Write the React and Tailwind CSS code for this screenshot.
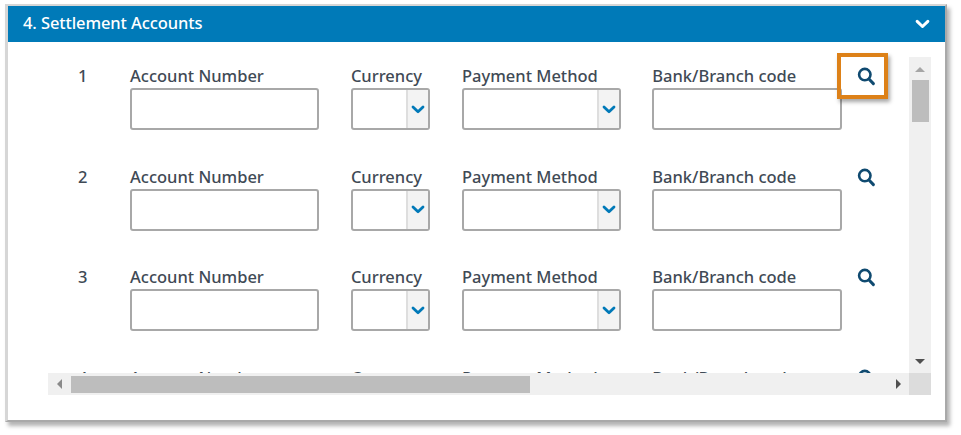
import React from 'react';

const labelFont = "font-['Noto_Sans','Open_Sans',sans-serif]";

const SearchIcon = () => (
  <svg width="20" height="20" viewBox="0 0 20 20" fill="none" stroke="#0f4a70" strokeWidth="2.6" strokeLinecap="round">
    <circle cx="8.8" cy="8.6" r="5.7" />
    <path d="M13.2 13.2 L17.4 17.6" strokeWidth="3" />
  </svg>
);

const Chevron = ({ color = '#0079b8', w = 14, h = 9 }) => (
  <svg width={w} height={h} viewBox="0 0 14 9" fill="none" stroke={color} strokeWidth="2.8" strokeLinecap="round" strokeLinejoin="round">
    <path d="M2 2 L7 6.8 L12 2" />
  </svg>
);

const Arrow = ({ points, color }) => (
  <svg width="12" height="12" viewBox="0 0 12 12">
    <polygon points={points} fill={color} />
  </svg>
);

const Field = ({ label, width, children }) => (
  <div className="flex flex-col shrink-0" style={{ width }}>
    <div className="h-[23px] text-[16.5px] leading-[22px] font-medium text-[#3f4a55] whitespace-nowrap">{label}</div>
    {children}
  </div>
);

const TextBox = () => (
  <div className="h-[42px] rounded-[3px] border-2 border-[#a8a8a8] bg-white" />
);

const SelectBox = () => (
  <div className="h-[42px] rounded-[3px] border-2 border-[#a8a8a8] bg-white flex justify-end">
    <div className="w-[22px] bg-[#f3f3f3] border-l-2 border-[#dedede] flex items-center justify-center">
      <Chevron />
    </div>
  </div>
);

const AccountRow = ({ n }) => (
  <div className="flex h-[100.6px] shrink-0 pt-[8px] pl-[30px]">
    <div className="w-[52px] shrink-0 text-[16.5px] leading-[22px] font-medium text-[#3f4a55]">{n}</div>
    <div className="flex gap-[31.5px]">
      <Field label="Account Number" width={189.4}><TextBox /></Field>
      <Field label="Currency" width={79.6}><SelectBox /></Field>
      <Field label="Payment Method" width={158.8}><SelectBox /></Field>
      <Field label="Bank/Branch code" width={189.6}><TextBox /></Field>
    </div>
    <div className="ml-[14px] pt-[1px] shrink-0"><SearchIcon /></div>
  </div>
);

const App = () => {
  return (
    <div className={`w-[961px] h-[435px] bg-white pt-[4px] pl-[5px] overflow-hidden ${labelFont}`}>
      {/* Panel */}
      <div className="relative w-[942px] h-[418px] bg-white border-t-2 border-l-[3px] border-r-2 border-b-2 border-t-[#d6d6d6] border-l-[#d6d6d6] border-r-[#a9a9a9] border-b-[#a9a9a9] shadow-[3px_4px_4px_rgba(0,0,0,0.3)]">
        {/* Header */}
        <div className="h-[36px] bg-[#007ab8] flex items-center justify-between pl-[15px] pr-[15px]">
          <span className="text-[16.5px] leading-[22px] mb-[3px] font-medium text-white tracking-[-0.1px]">4. Settlement Accounts</span>
          <Chevron color="#ffffff" w={15} h={10} />
        </div>

        {/* Scroll area */}
        <div className="ml-[40px] mt-[15px] w-[883px] h-[338px] grid grid-cols-[861px_22px] grid-rows-[316px_22px]">
          <div className="overflow-hidden flex flex-col">
            <AccountRow n="1" />
            <AccountRow n="2" />
            <AccountRow n="3" />
            <AccountRow n="4" />
          </div>

          {/* Vertical scrollbar */}
          <div className="bg-[#f0f0f0] flex flex-col items-center">
            <div className="h-[23px] flex items-center justify-center">
              <Arrow points="1,9 6,4 11,9" color="#a6a6a6" />
            </div>
            <div className="w-[17px] h-[42px] bg-[#bdbdbd]" />
            <div className="mt-auto h-[23px] flex items-center justify-center">
              <Arrow points="1,3 11,3 6,8" color="#505050" />
            </div>
          </div>

          {/* Horizontal scrollbar */}
          <div className="bg-[#f0f0f0] flex items-center">
            <div className="w-[23px] flex items-center justify-center">
              <Arrow points="8,1 8,11 3,6" color="#8a8a8a" />
            </div>
            <div className="w-[459px] h-[17px] bg-[#bdbdbd]" />
            <div className="ml-auto w-[23px] flex items-center justify-center">
              <Arrow points="4,1 4,11 9,6" color="#505050" />
            </div>
          </div>
          <div className="bg-[#dcdcdc]" />
        </div>

        {/* Highlight box drawn over the search icon */}
        <div className="absolute left-[829px] top-[47px] w-[51px] h-[46px] border-[4px] border-[#dd8118] shadow-[2px_3px_4px_rgba(0,0,0,0.35)]" />
      </div>
    </div>
  );
};

export default App;
